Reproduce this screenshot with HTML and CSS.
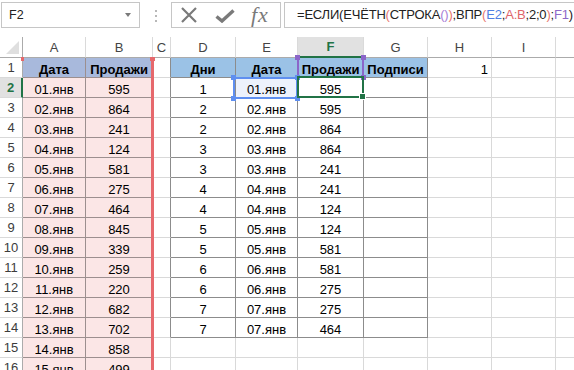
FILE: index.html
```html
<!DOCTYPE html>
<html lang="ru">
<head>
<meta charset="UTF-8">
<title>Книга1 - Excel</title>
<meta name="viewport" content="width=device-width, initial-scale=1.0">
<link rel="stylesheet" href="styles.css">
</head>
<body>

<!-- Formula bar -->
<div class="toolbar">
  <div class="name-box">F2<span class="caret"></span></div>
  <div class="grip"><i></i><i></i><i></i></div>
  <div class="fx-box">
    <svg class="btn-cancel" width="18" height="16" viewBox="0 0 18 16">
      <path d="M2 1 L16 15 M16 1 L2 15" stroke="#7a7a7a" stroke-width="2.2" fill="none"/>
    </svg>
    <svg class="btn-enter" width="20" height="14" viewBox="0 0 20 14">
      <path d="M1.5 7.5 L7 12 L18.5 1.5" stroke="#7a7a7a" stroke-width="3.4" fill="none"/>
    </svg>
    <span class="fx">fx</span>
  </div>
  <div class="formula">=ЕСЛИ(ЕЧЁТН<span class="p1">(</span>СТРОКА<span class="p2">()</span><span class="p1">)</span>;ВПР<span class="p1">(</span><span class="r-blue">E2</span>;<span class="r-red">A:B</span>;2;0<span class="p1">)</span>;<span class="r-purple">F1</span>)</div>
</div>

<!-- Sheet -->
<div class="sheet" id="sheet">
  <div class="range-ab"></div>
  <i class="mark mark-l"></i>
  <i class="mark mark-r"></i>

  <div class="ref-f1"><i class="h tl"></i><i class="h tr"></i><i class="h bl"></i><i class="h br"></i></div>
  <div class="ref-e2"><i class="h tl"></i><i class="h tr"></i><i class="h bl"></i><i class="h br"></i></div>
  <div class="active-cell"><i class="fill"></i></div>
</div>

<script>
const sales = [
  ['01.янв', 595], ['02.янв', 864], ['03.янв', 241], ['04.янв', 124], ['05.янв', 581],
  ['06.янв', 275], ['07.янв', 464], ['08.янв', 845], ['09.янв', 339], ['10.янв', 259],
  ['11.янв', 220], ['12.янв', 682], ['13.янв', 702], ['14.янв', 858], ['15.янв', 499]
];
const days = [
  [1, '01.янв', 595], [2, '02.янв', 595], [2, '02.янв', 864], [3, '03.янв', 864],
  [3, '03.янв', 241], [4, '04.янв', 241], [4, '04.янв', 124], [5, '05.янв', 124],
  [5, '05.янв', 581], [6, '06.янв', 581], [6, '06.янв', 275], [7, '07.янв', 275],
  [7, '07.янв', 464]
];

let html = '<div class="cell corner"><span class="tri"></span></div>';
['A', 'B', 'C', 'D', 'E', 'F', 'G', 'H', 'I', ''].forEach(l => {
  html += `<div class="cell colhdr${l === 'F' ? ' sel' : ''}">${l}</div>`;
});

for (let r = 1; r <= 16; r++) {
  html += `<div class="cell rowhdr${r === 2 ? ' sel' : ''}">${r}</div>`;

  // A:B source table
  if (r === 1) {
    html += '<div class="cell src head">Дата</div><div class="cell src head">Продажи</div>';
  } else {
    const s = sales[r - 2];
    html += `<div class="cell src">${s[0]}</div><div class="cell src">${s[1]}</div>`;
  }

  html += `<div class="cell${r <= 14 ? ' edge' : ''}"></div>`;

  // D:G result table
  if (r === 1) {
    html += '<div class="cell tbl head">Дни</div><div class="cell tbl head">Дата</div>'
          + '<div class="cell tbl head">Продажи</div><div class="cell tbl head">Подписи</div>';
  } else if (r <= 14) {
    const d = days[r - 2];
    html += `<div class="cell tbl">${d[0]}</div>`
          + `<div class="cell tbl${r === 2 ? ' ref' : ''}">${d[1]}</div>`
          + `<div class="cell tbl">${d[2]}</div><div class="cell tbl"></div>`;
  } else {
    html += '<div class="cell"></div>'.repeat(4);
  }

  html += r === 1 ? '<div class="cell num">1</div>' : '<div class="cell"></div>';
  html += '<div class="cell"></div><div class="cell"></div>';
}

document.getElementById('sheet').insertAdjacentHTML('afterbegin', html);
</script>
</body>
</html>
```

FILE: styles.css
```css
body {
  margin: 0;
  width: 574px;
  height: 370px;
  overflow: hidden;
  background: #fff;
  font-family: 'Liberation Sans', Arial, sans-serif;
  color: #000;
}

/* ---------- formula bar ---------- */
.toolbar {
  display: flex;
  align-items: flex-start;
  height: 37px;
  padding-top: 2px;
  box-sizing: border-box;
}
.name-box {
  width: 139px;
  height: 26px;
  margin-left: 1px;
  padding: 0 8px 0 7px;
  border: 1px solid #c6c6c6;
  box-sizing: border-box;
  display: flex;
  align-items: center;
  justify-content: space-between;
  font-size: 12.5px;
  color: #222;
}
.caret {
  width: 0;
  height: 0;
  border-left: 3.5px solid transparent;
  border-right: 3.5px solid transparent;
  border-top: 4px solid #7a7a7a;
}
.grip {
  width: 31px;
  display: flex;
  flex-direction: column;
  align-items: center;
  gap: 3px;
  padding-top: 8px;
}
.grip i {
  width: 2px;
  height: 2px;
  background: #b8b8b8;
}
.fx-box {
  width: 110px;
  height: 26px;
  border: 1px solid #c6c6c6;
  box-sizing: border-box;
  display: flex;
  align-items: center;
}
.btn-cancel {
  margin-left: 8px;
}
.btn-enter {
  margin-left: 17px;
  margin-top: 2px;
}
.fx {
  margin-left: 16px;
  font-family: 'Liberation Serif', 'Times New Roman', serif;
  font-style: italic;
  font-size: 22px;
  letter-spacing: 1px;
  color: #7a7a7a;
  line-height: 24px;
}
.formula {
  flex: 1;
  height: 26px;
  margin-left: 3px;
  margin-right: -20px;
  padding-left: 12px;
  border: 1px solid #c6c6c6;
  box-sizing: border-box;
  font-size: 13px;
  letter-spacing: -0.2px;
  line-height: 24px;
  white-space: nowrap;
  color: #222;
}
.p1 { color: #e8766f; }
.p2 { color: #a77ed6; }
.r-blue { color: #4f7fe3; }
.r-red { color: #e0646a; }
.r-purple { color: #8d68c9; }

/* ---------- sheet grid ---------- */
.sheet {
  position: relative;
  display: grid;
  grid-template-columns: 23px 63px 67px 18px 65px 62px 66px 64px 64px 64px 40px;
  grid-template-rows: 21px repeat(16, 20px);
  height: 333px;
  overflow: hidden;
}
.cell {
  box-sizing: border-box;
  border-right: 1px solid #d9d9d9;
  border-bottom: 1px solid #d9d9d9;
  display: flex;
  align-items: flex-end;
  justify-content: center;
  font-size: 13px;
  line-height: 15px;
  white-space: nowrap;
}
.corner {
  border-right-color: #ababab;
  border-bottom-color: #ababab;
  align-items: flex-end;
  justify-content: flex-end;
  padding: 0 3px 3px 0;
}
.tri {
  width: 0;
  height: 0;
  border-left: 13px solid transparent;
  border-bottom: 13px solid #dfdfdf;
}
.colhdr {
  align-items: center;
  color: #444;
  border-right-color: #dadada;
  border-bottom-color: #ababab;
}
.colhdr.sel {
  background: #e1e1e1;
  color: #217346;
  font-weight: bold;
  border-bottom: 2px solid #217346;
}
.rowhdr {
  align-items: center;
  color: #3c3c3c;
  border-right-color: #ababab;
}
.rowhdr.sel {
  background: #e1e1e1;
  color: #217346;
  font-weight: bold;
  border-right: 2px solid #217346;
}

.src {
  background: #fbe6e6;
  border-color: #9c8f8f;
}
.src.head {
  background: #a8b9dc;
  font-weight: bold;
}
.tbl {
  border-color: #8c8c8c;
}
.tbl.head {
  background: #9bc2e6;
  font-weight: bold;
}
.edge {
  border-right-color: #8c8c8c;
}
.ref {
  background: #edf2fc;
}
.num {
  justify-content: flex-end;
  padding-right: 3px;
}

/* ---------- reference highlights ---------- */
.range-ab {
  position: absolute;
  left: 151px;
  top: 21px;
  width: 3px;
  bottom: 0;
  background: #e6686c;
}
.mark {
  position: absolute;
  top: 20px;
  height: 4px;
  background: #e6686c;
}
.mark-l { left: 21px; width: 3px; }
.mark-r { left: 150px; width: 5px; }

.ref-f1, .ref-e2, .active-cell {
  position: absolute;
  box-sizing: border-box;
}
.ref-f1 {
  left: 297px;
  top: 20px;
  width: 67px;
  height: 21px;
  border-left: 2px solid #8b66c9;
  border-right: 2px solid #8b66c9;
}
.ref-e2 {
  left: 233px;
  top: 40px;
  width: 65px;
  height: 22px;
  border: 2px solid #5f8ff0;
}
.h {
  position: absolute;
  width: 5px;
  height: 5px;
}
.ref-f1 .h { background: #8b66c9; }
.ref-e2 .h { background: #5f8ff0; }
.tl { left: -4px; top: -4px; }
.tr { right: -4px; top: -4px; }
.bl { left: -4px; bottom: -4px; }
.br { right: -4px; bottom: -4px; }
.ref-f1 .tl, .ref-f1 .tr { top: -2px; }
.ref-f1 .bl, .ref-f1 .br { bottom: -2px; }

.active-cell {
  left: 297px;
  top: 39px;
  width: 67px;
  height: 22px;
  border: 2px solid #217346;
}
.fill {
  position: absolute;
  right: -4px;
  bottom: -4px;
  width: 5px;
  height: 5px;
  background: #217346;
  border: 1px solid #fff;
}
```
